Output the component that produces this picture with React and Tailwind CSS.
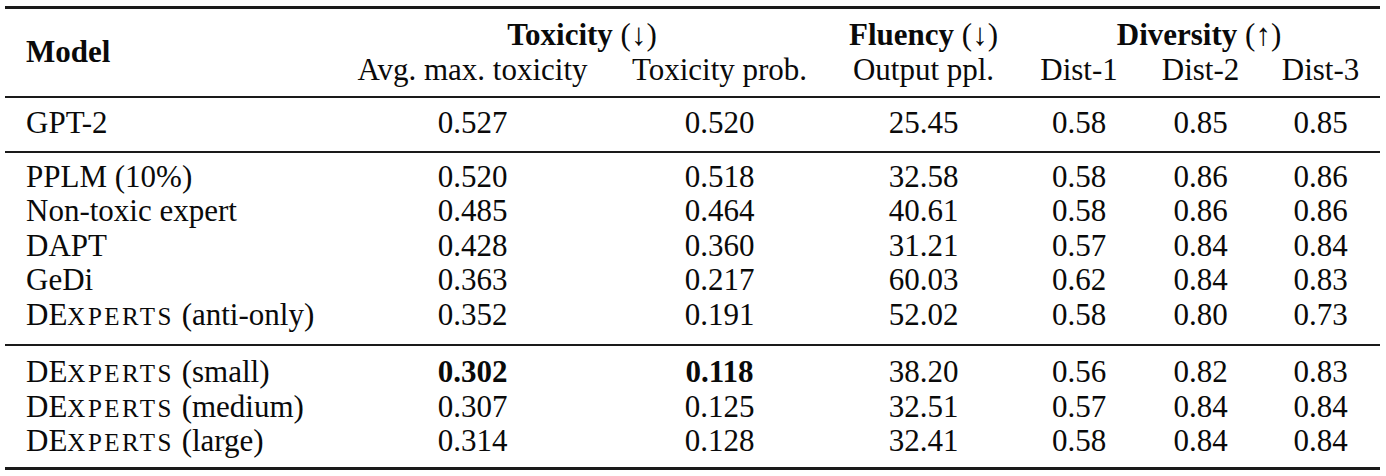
import React from "react";

const cols = "grid grid-cols-[330px_275px_219px_189px_122px_121px_119px]";

function DEx({ suffix }) {
  return (
    <span>
      DE<span className="text-[25px] leading-none tracking-[2.5px]">XPERTS</span> {suffix}
    </span>
  );
}

const groups = [
  {
    pt: "pt-[8.5px]",
    pb: "pb-[10px]",
    rows: [[<span>GPT-2</span>, "0.527", "0.520", "25.45", "0.58", "0.85", "0.85"]],
  },
  {
    pt: "pt-[7px]",
    pb: "pb-[12px]",
    rows: [
      [<span>PPLM (10%)</span>, "0.520", "0.518", "32.58", "0.58", "0.86", "0.86"],
      [<span>Non-toxic expert</span>, "0.485", "0.464", "40.61", "0.58", "0.86", "0.86"],
      [<span>DAPT</span>, "0.428", "0.360", "31.21", "0.57", "0.84", "0.84"],
      [<span>GeDi</span>, "0.363", "0.217", "60.03", "0.62", "0.84", "0.83"],
      [<DEx suffix="(anti-only)" />, "0.352", "0.191", "52.02", "0.58", "0.80", "0.73"],
    ],
  },
  {
    pt: "pt-[9px]",
    pb: "pb-[8.5px]",
    rows: [
      [<DEx suffix="(small)" />, "0.302", "0.118", "38.20", "0.56", "0.82", "0.83", true],
      [<DEx suffix="(medium)" />, "0.307", "0.125", "32.51", "0.57", "0.84", "0.84"],
      [<DEx suffix="(large)" />, "0.314", "0.128", "32.41", "0.58", "0.84", "0.84"],
    ],
  },
];

export default function App() {
  return (
    <div className="w-[1386px] h-[476px] bg-white overflow-hidden pt-[6px] pl-[5px]">
      <div className="w-[1375px] font-['Liberation_Serif','Times_New_Roman',serif] text-[#0a0a0a] text-[31px] leading-[34.5px] border-t-[3px] border-b-[3px] border-[#1a1a1a]">
        {/* header */}
        <div className={`${cols} pt-[9px] pb-[8.5px] border-b-2 border-[#1a1a1a]`}>
          <div className="row-span-2 flex items-center pl-[21px] font-bold">Model</div>
          <div className="col-span-2 text-center">
            <span className="font-bold">Toxicity</span> (↓)
          </div>
          <div className="text-center">
            <span className="font-bold">Fluency</span> (↓)
          </div>
          <div className="col-span-3 text-center">
            <span className="font-bold">Diversity</span> (↑)
          </div>
          <div className="text-center whitespace-nowrap">Avg. max. toxicity</div>
          <div className="text-center whitespace-nowrap">Toxicity prob.</div>
          <div className="text-center whitespace-nowrap">Output ppl.</div>
          <div className="text-center">Dist-1</div>
          <div className="text-center">Dist-2</div>
          <div className="text-center">Dist-3</div>
        </div>
        {groups.map((g, gi) => (
          <div
            key={gi}
            className={`${g.pt} ${g.pb} ${gi < groups.length - 1 ? "border-b-2 border-[#1a1a1a]" : ""}`}
          >
            {g.rows.map((r, ri) => (
              <div key={ri} className={`${cols} h-[34.5px]`}>
                <div className="pl-[21px] whitespace-nowrap">{r[0]}</div>
                {r.slice(1, 7).map((v, vi) => (
                  <div
                    key={vi}
                    className={`text-center ${r[7] && vi < 2 ? "font-bold" : ""}`}
                  >
                    {v}
                  </div>
                ))}
              </div>
            ))}
          </div>
        ))}
      </div>
    </div>
  );
}
